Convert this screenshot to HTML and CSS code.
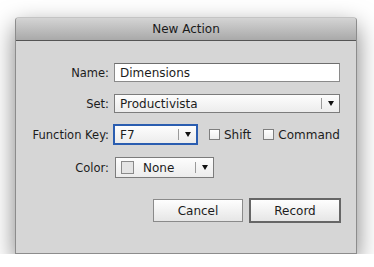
FILE: index.html
```html
<!DOCTYPE html>
<html lang="en">
<head>
  <meta charset="UTF-8">
  <title>New Action</title>
  <link rel="stylesheet" href="styles.css">
</head>
<body>
  <div class="window">
    <div class="titlebar">New Action</div>
    <div class="content">
      <div class="form">
        <div class="label">Name:</div>
        <div class="field">
          <div class="text-input">Dimensions</div>
        </div>

        <div class="label">Set:</div>
        <div class="field">
          <div class="select select-wide">
            <span class="select-value">Productivista</span>
            <span class="select-arrow"></span>
          </div>
        </div>

        <div class="label">Function Key:</div>
        <div class="field">
          <div class="select select-key focused">
            <span class="select-value">F7</span>
            <span class="select-arrow"></span>
          </div>
          <div class="checkbox"><span class="box"></span>Shift</div>
          <div class="checkbox"><span class="box"></span>Command</div>
        </div>

        <div class="label label-color">Color:</div>
        <div class="field field-color">
          <div class="select select-color">
            <span class="swatch"></span>
            <span class="select-value">None</span>
            <span class="select-arrow"></span>
          </div>
        </div>
      </div>

      <div class="buttons">
        <button class="btn">Cancel</button>
        <button class="btn btn-default">Record</button>
      </div>
    </div>
  </div>
</body>
</html>
```

FILE: styles.css
```css
body {
  margin: 0;
  padding: 17px 0 0 15px;
  background-color: #fff;
  font-family: "DejaVu Sans", Verdana, sans-serif;
  font-size: 11.5px;
  color: #1c1c1c;
}
.window {
  width: 340px;
  border: 1px solid #8c8c8c;
  border-top-color: #c4c4c4;
  border-radius: 4px 4px 0 0;
  background-color: #d6d6d6;
  box-shadow: 0 9px 24px rgba(0, 0, 0, 0.5);
}
.titlebar {
  height: 22px;
  line-height: 22px;
  text-align: center;
  font-size: 12px;
  color: #1a1a1a;
  border-radius: 3px 3px 0 0;
  background: linear-gradient(#d4d4d4, #a9a9a9);
  border-bottom: 1px solid #555;
}
.content {
  padding: 16px 15px 30px 0;
}
.form {
  display: grid;
  grid-template-columns: 93px minmax(0, 1fr);
  grid-auto-rows: 31px;
  column-gap: 5px;
  align-items: center;
}
.label {
  text-align: right;
}
.label-color,
.field-color {
  margin-top: 4px;
}
.field {
  display: flex;
  align-items: center;
}
.text-input {
  width: calc(100% - 1px);
  height: 19px;
  line-height: 18px;
  box-sizing: border-box;
  padding-left: 5px;
  background-color: #fff;
  border: 1px solid #8a8a8a;
  border-top-color: #6e6e6e;
  font-size: 12px;
}
.select {
  display: flex;
  align-items: center;
  box-sizing: border-box;
  background: linear-gradient(#fdfdfd, #ececec);
  border: 1px solid #7c7c7c;
  font-size: 12px;
}
.select-value {
  flex-grow: 1;
  padding-left: 5px;
}
.select-arrow {
  width: 17px;
  height: 11px;
  border-left: 1px solid #9a9a9a;
  position: relative;
}
.select-arrow::after {
  content: "";
  position: absolute;
  left: 6px;
  top: 3px;
  border-left: 3.5px solid transparent;
  border-right: 3.5px solid transparent;
  border-top: 5px solid #111;
}
.select-wide {
  width: calc(100% - 1px);
  height: 19px;
}
.select-key {
  flex-shrink: 0;
  width: 85px;
  height: 21px;
  margin-left: -1px;
  margin-right: 11px;
}
.focused {
  border: 2px solid #2a5db0;
}
.select-color {
  width: 99px;
  height: 21px;
  margin-left: 1px;
}
.swatch {
  width: 11px;
  height: 11px;
  margin-left: 5px;
  border: 1px solid #8a8a8a;
  background-color: #e4e4e4;
}
.select-color .select-value {
  padding-left: 9px;
}
.checkbox {
  display: flex;
  align-items: center;
  flex-shrink: 0;
  margin-right: 12px;
  font-size: 12px;
  white-space: nowrap;
}
.checkbox:last-child {
  margin-right: 0;
}
.box {
  width: 9px;
  height: 9px;
  margin-right: 4px;
  border: 1px solid #7e7e7e;
  background: linear-gradient(#fff, #ededed);
}
.buttons {
  display: flex;
  justify-content: flex-end;
  align-items: center;
  gap: 6px;
  margin-top: 17px;
}
.btn {
  width: 90px;
  height: 23px;
  padding: 0;
  font-family: "DejaVu Sans", Verdana, sans-serif;
  font-size: 12px;
  color: #1c1c1c;
  background: linear-gradient(#fefefe, #e6e6e6);
  border: 1px solid #8a8a8a;
}
.btn-default {
  width: 92px;
  height: 25px;
  border: 2px solid #666;
}
```
